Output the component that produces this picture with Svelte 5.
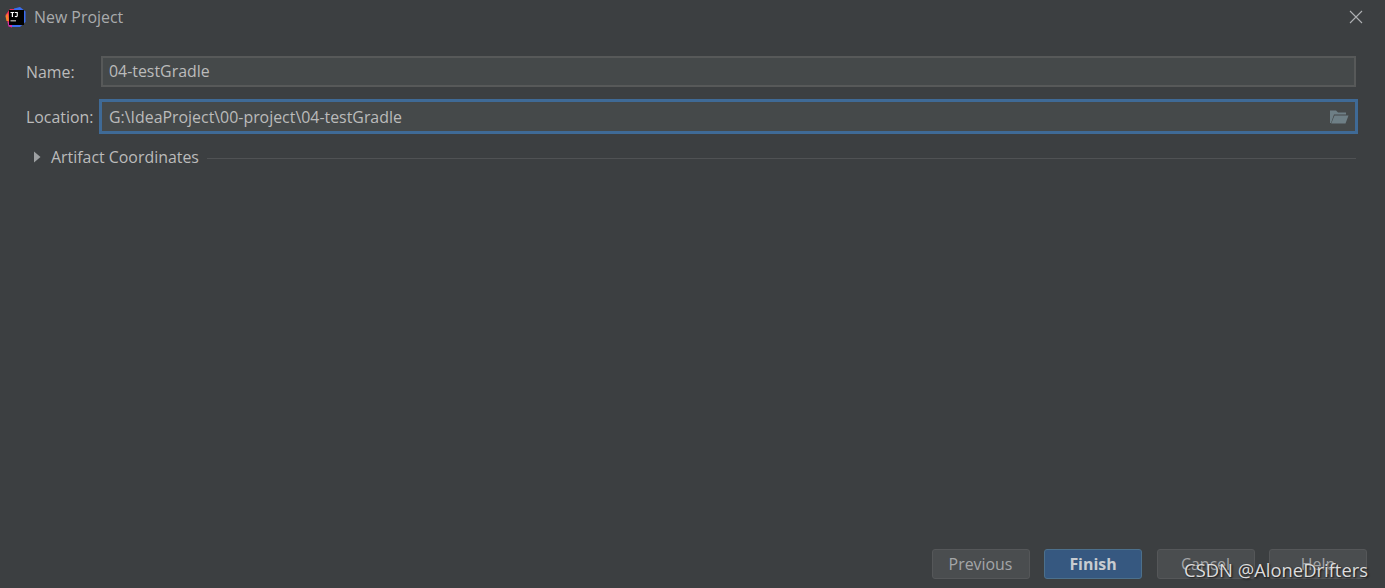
<script>
	const buttons = [
		{ label: 'Previous' },
		{ label: 'Finish', primary: true },
		{ label: 'Cancel' },
		{ label: 'Help' }
	];
</script>

<div class="dialog">
	<header class="titlebar">
		<svg class="logo" width="21" height="21" viewBox="0 0 21 21">
			<path d="M0.5 8 L5 2 L10 2 L8 18 L3 16 Z" fill="#f0285a" />
			<path d="M0.5 9 L3 6 L4 14 L1.5 14 Z" fill="#f7812b" />
			<path d="M9 1.5 L15 0 L20.5 4.5 L20.5 15 L15 20 L6 20 Z" fill="#3a6cf0" />
			<path d="M2.5 15 L7 17 L7 20.5 L3.5 19.5 Z" fill="#d62fa8" />
			<rect x="4" y="3" width="15" height="15" fill="#000" />
			<path d="M5.5 5h3.8v1.1H8v4H6.8v-4H5.5zM10 5h2.8v3.6c0 1-.6 1.6-1.6 1.6-.8 0-1.3-.3-1.6-.8l.7-.7c.2.3.5.4.8.4.4 0 .6-.2.6-.6V6.1H10z" fill="#fff" />
			<rect x="5.5" y="13.2" width="5.5" height="1.2" fill="#bbb" />
		</svg>
		<span class="title">New Project</span>
		<svg class="close" width="14" height="14" viewBox="0 0 14 14">
			<path d="M1 1 L13 13 M13 1 L1 13" stroke="#afb1b3" stroke-width="1.1" fill="none" />
		</svg>
	</header>

	<main class="form">
		<div class="row name-row">
			<label for="name">Name:</label>
			<div class="field">
				<input id="name" value="04-testGradle" />
			</div>
		</div>
		<div class="row location-row">
			<label for="location">Location:</label>
			<div class="field focused">
				<input id="location" value="G:\IdeaProject\00-project\04-testGradle" />
				<svg class="folder" width="20" height="16" viewBox="0 0 20 16">
					<path d="M1 14 V1.5 H7 L9 3.5 H17 V5.5 H5 L2 14 Z" fill="#6e7f86" />
					<path d="M5.5 6.5 H19.5 L16.5 14.5 H2.2 Z" fill="#6e7f86" />
				</svg>
			</div>
		</div>
		<div class="section">
			<svg class="arrow" width="8" height="12" viewBox="0 0 8 12">
				<path d="M1 0.5 L7.5 6 L1 11.5 Z" fill="#9da0a2" />
			</svg>
			<span>Artifact Coordinates</span>
			<div class="rule"></div>
		</div>
	</main>

	<footer class="actions">
		{#each buttons as b}
			<button class:primary={b.primary}>{b.label}</button>
		{/each}
	</footer>

	<div class="watermark">CSDN @AloneDrifters</div>
</div>

<style>
	:global(body) {
		margin: 0;
		background: #3c3f41;
	}

	.dialog {
		position: relative;
		display: flex;
		flex-direction: column;
		height: 588px;
		overflow: hidden;
		background: #3c3f41;
		color: #bbbbbb;
		font-family: 'Open Sans', 'Noto Sans', sans-serif;
		font-size: 15.9px;
	}

	.titlebar {
		display: flex;
		align-items: center;
		height: 34px;
		padding: 0 22px 0 5px;
		flex: none;
	}

	.logo {
		margin-right: 8px;
	}

	.title {
		flex: 1;
		color: #a9abad;
	}

	.form {
		flex: 1;
		display: flex;
		flex-direction: column;
		padding: 22px 29px 0 26px;
	}

	.row {
		display: flex;
		align-items: center;
	}

	.location-row {
		margin-top: 14px;
	}

	label {
		width: 75px;
		flex: none;
		color: #bbbbbb;
	}

	.field {
		flex: 1;
		display: flex;
		align-items: center;
		height: 31px;
		box-sizing: border-box;
		background: #45494a;
		border: 2px solid #575959;
	}

	.field input {
		flex: 1;
		min-width: 0;
		height: 100%;
		padding: 0 0 2px 6px;
		box-sizing: border-box;
		border: 0;
		outline: 0;
		background: transparent;
		color: #bbbbbb;
		font: inherit;
	}

	.focused {
		border: 1px solid #3f6a96;
		box-shadow: 0 0 0 2px #3f6a96;
		padding-right: 6px;
	}

	.focused input {
		padding: 0 0 0 7px;
	}

	.section {
		display: flex;
		align-items: center;
		margin: 15px 0 0 7px;
		height: 20px;
	}

	.arrow {
		margin-right: 10px;
	}

	.rule {
		flex: 1;
		height: 1px;
		margin: 2px 0 0 8px;
		background: #505254;
	}

	.actions {
		display: flex;
		justify-content: flex-end;
		gap: 14.5px;
		padding: 0 18px 9px 0;
		flex: none;
	}

	button {
		width: 98px;
		height: 30px;
		padding: 0;
		border: 1px solid #555759;
		border-radius: 3px;
		background: #4a4d4f;
		color: #a4a6a8;
		font: inherit;
	}

	button.primary {
		border-color: #4c708c;
		background: #365880;
		color: #c8ccd0;
		font-weight: 700;
	}

	.watermark {
		position: absolute;
		right: 17px;
		bottom: 6px;
		font-size: 18.4px;
		color: #dcdcdc;
		text-shadow: 1px 1px 2px #111;
		white-space: nowrap;
	}
</style>
